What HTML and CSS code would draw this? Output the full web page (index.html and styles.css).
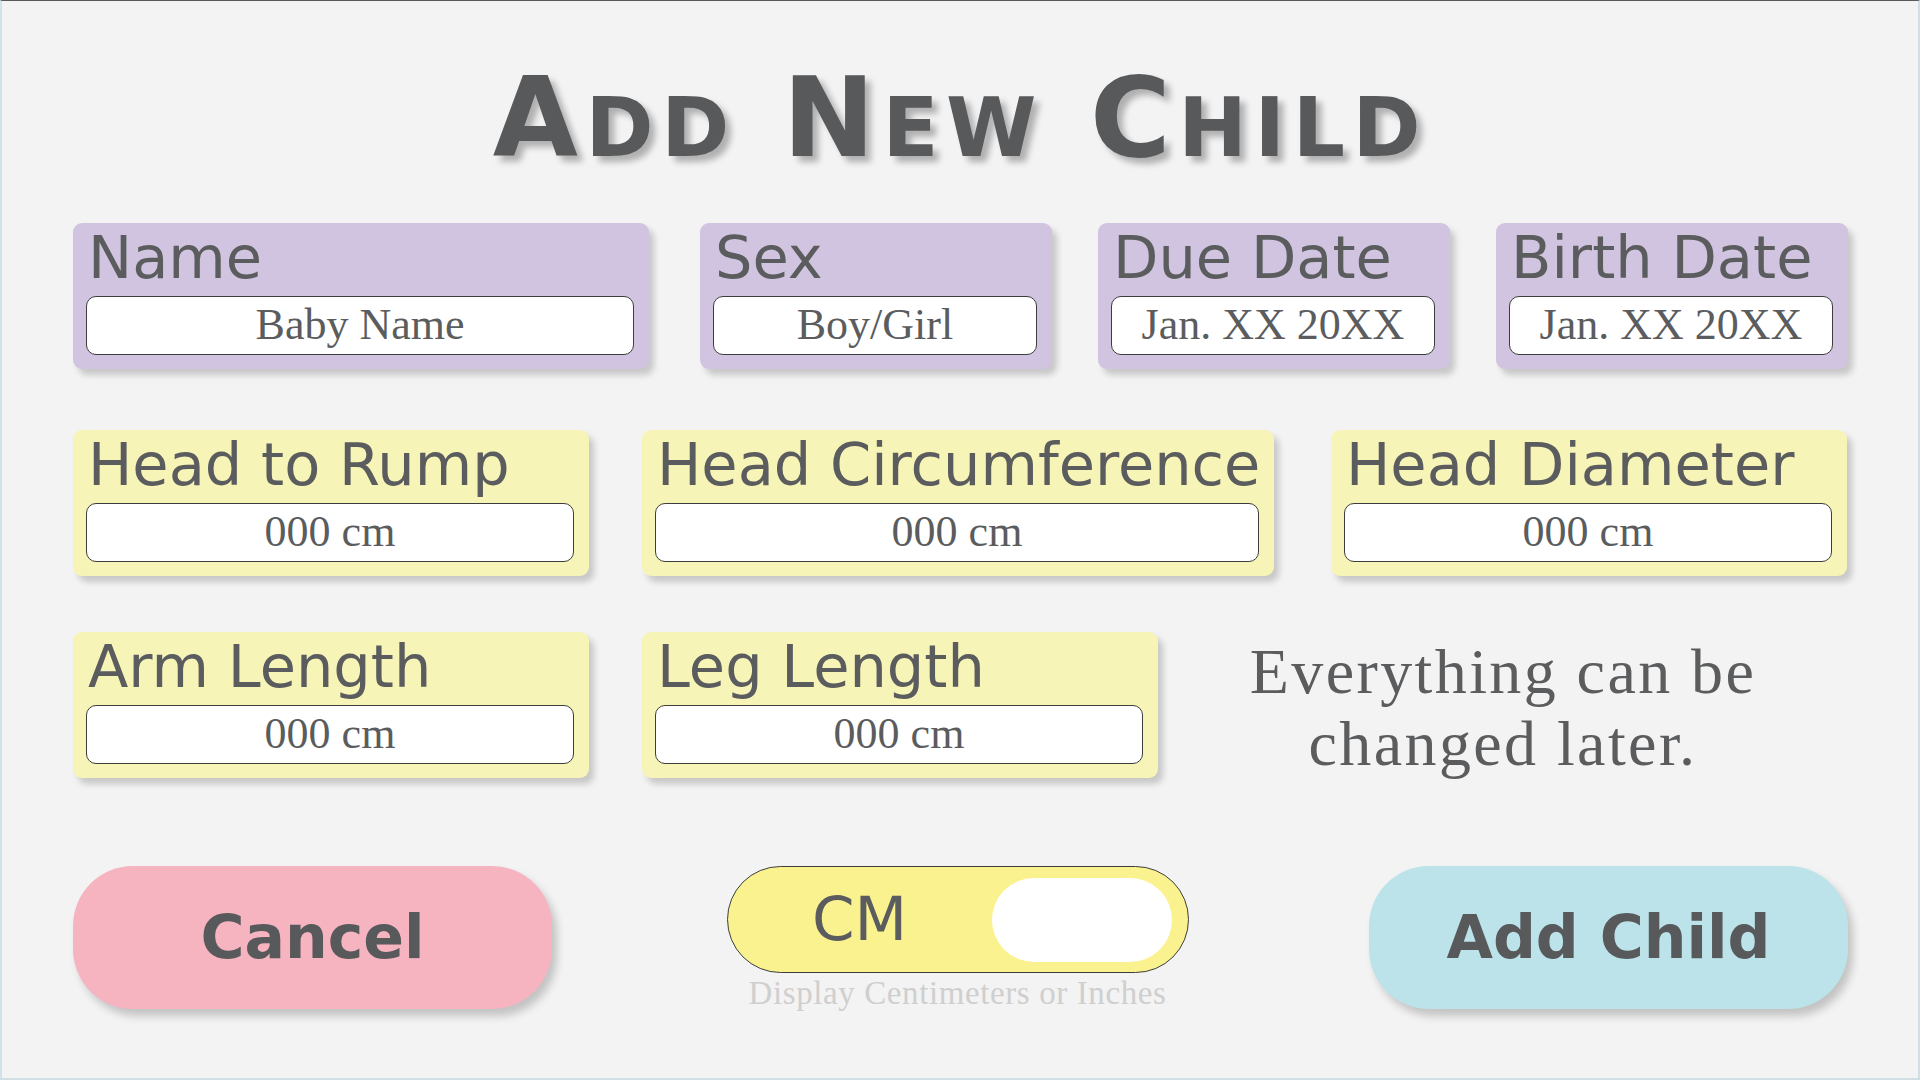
FILE: index.html
```html
<!DOCTYPE html>
<html lang="en">
<head>
<meta charset="utf-8">
<title>Add New Child</title>
<link rel="stylesheet" href="styles.css">
</head>
<body>
<main class="page">
  <h1 class="title"><span class="big">A</span><span class="sc">dd</span> <span class="big">N</span><span class="sc">ew</span> <span class="big">C</span><span class="sc">hild</span></h1>

  <section class="row row-1">
    <div class="card purple w-name">
      <div class="label">Name</div>
      <div class="input">Baby Name</div>
    </div>
    <div class="card purple w-small">
      <div class="label">Sex</div>
      <div class="input">Boy/Girl</div>
    </div>
    <div class="card purple w-small">
      <div class="label">Due Date</div>
      <div class="input">Jan. XX 20XX</div>
    </div>
    <div class="card purple w-small">
      <div class="label">Birth Date</div>
      <div class="input">Jan. XX 20XX</div>
    </div>
  </section>

  <section class="row row-2">
    <div class="card yellow w-mid">
      <div class="label">Head to Rump</div>
      <div class="input">000 cm</div>
    </div>
    <div class="card yellow w-wide">
      <div class="label">Head Circumference</div>
      <div class="input">000 cm</div>
    </div>
    <div class="card yellow w-mid">
      <div class="label">Head Diameter</div>
      <div class="input">000 cm</div>
    </div>
  </section>

  <section class="row row-3">
    <div class="card yellow w-mid">
      <div class="label">Arm Length</div>
      <div class="input">000 cm</div>
    </div>
    <div class="card yellow w-mid">
      <div class="label">Leg Length</div>
      <div class="input">000 cm</div>
    </div>
    <p class="note">Everything can be<br>changed later.</p>
  </section>

  <section class="row row-4">
    <button class="btn cancel">Cancel</button>
    <div class="toggle-wrap">
      <div class="toggle">
        <span class="toggle-text">CM</span>
        <span class="knob"></span>
      </div>
      <div class="caption">Display Centimeters or Inches</div>
    </div>
    <button class="btn add">Add Child</button>
  </section>
</main>
</body>
</html>
```

FILE: styles.css
```css
* { box-sizing: border-box; }

html, body {
  margin: 0;
  padding: 0;
}

body {
  width: 1920px;
  height: 1080px;
  background: #f3f3f3;
  border-top: 1px solid #58595b;
  border-left: 2px solid #cfe3e8;
  border-right: 2px solid #cfdfe4;
  border-bottom: 2px solid #cfdfe4;
  color: #5b5c5e;
  font-family: "DejaVu Sans", "Liberation Sans", sans-serif;
  overflow: hidden;
}

.page {
  display: flex;
  flex-direction: column;
  padding: 0 70px 0 71px;
}

.title {
  margin: 62px 0 0;
  font-size: 110px;
  line-height: 110px;
  font-weight: bold;
  text-align: center;
  color: #58595b;
  letter-spacing: 7.6px;
  text-shadow: 6px 6px 6px rgba(0, 0, 0, 0.28);
}

.title .sc {
  font-size: 82px;
  text-transform: uppercase;
}

.row {
  display: flex;
  align-items: flex-start;
}

.row-1 { margin-top: 40px; gap: 46px; }
.row-1 .w-name { margin-right: 5px; }
.row-2 { margin-top: 61px; gap: 53px; }
.row-2 .w-wide { margin-right: 4px; }
.row-3 { margin-top: 56px; gap: 53px; }
.row-4 { margin-top: 86px; justify-content: space-between; }

.card {
  height: 146px;
  border-radius: 9px;
  padding: 5px 15px 0 13px;
  display: flex;
  flex-direction: column;
  box-shadow: 5px 6px 6px rgba(0, 0, 0, 0.18);
}

.purple { background: #d1c4e0; }
.yellow { background: #f7f4b8; }

.w-name  { width: 576px; }
.w-small { width: 352px; }
.w-mid   { width: 516px; }
.w-wide  { width: 632px; }

.label {
  font-size: 59px;
  line-height: 60px;
  height: 60px;
  padding-left: 2px;
  white-space: nowrap;
  color: #5b5c5e;
}

.input {
  margin-top: 8px;
  height: 59px;
  background: #ffffff;
  border: 1.5px solid #3d3d3d;
  border-radius: 10px;
  display: flex;
  align-items: center;
  justify-content: center;
  font-family: "Liberation Serif", "Times New Roman", serif;
  font-size: 44px;
  color: #5b5c5e;
  padding-bottom: 2px;
}

.note {
  flex: 1;
  margin: 4px 0 0 -53px;
  text-align: center;
  font-family: "Liberation Serif", "Times New Roman", serif;
  font-size: 64px;
  line-height: 72px;
  letter-spacing: 2.4px;
  color: #5b5c5e;
}

.btn {
  width: 479px;
  height: 143px;
  border: none;
  border-radius: 60px;
  font-family: "DejaVu Sans", "Liberation Sans", sans-serif;
  font-weight: bold;
  font-size: 60px;
  color: #58595b;
  box-shadow: 5px 7px 8px rgba(0, 0, 0, 0.2);
  padding: 0 0 2px;
}

.cancel { background: #f6b3c0; }
.add { background: #bbe3e9; }

.toggle-wrap {
  display: flex;
  flex-direction: column;
  align-items: center;
  margin-left: -6px;
}

.toggle {
  width: 462px;
  height: 107px;
  background: #faf28e;
  border: 1.5px solid #3d3d3d;
  border-radius: 54px;
  display: flex;
  align-items: center;
  padding: 0 16px 0 0;
}

.toggle-text {
  flex: 1;
  text-align: center;
  font-size: 61px;
  line-height: 1;
  color: #5b5c5e;
  padding-bottom: 2px;
}

.knob {
  width: 180px;
  height: 84px;
  background: #ffffff;
  border-radius: 42px;
}

.caption {
  margin-top: 2px;
  font-family: "Liberation Serif", "Times New Roman", serif;
  font-size: 33px;
  line-height: 36px;
  letter-spacing: 0.6px;
  color: #cfcfcf;
  white-space: nowrap;
}
```
